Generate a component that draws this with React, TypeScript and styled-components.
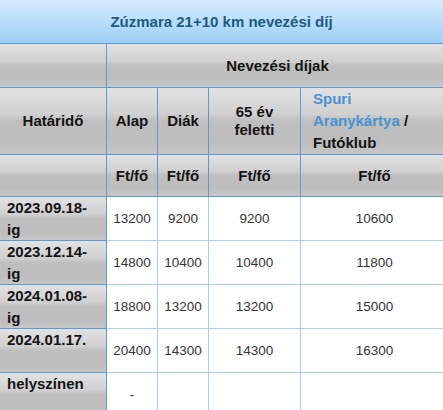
import styled, { createGlobalStyle } from "styled-components";

const GlobalStyle = createGlobalStyle`
  html, body {
    margin: 0;
    padding: 0;
    overflow: hidden;
    background: #ffffff;
  }
  *, *::before, *::after {
    box-sizing: border-box;
  }
`

const Page = styled.div`
  width: 443px;
  font-family: "Liberation Sans", Arial, sans-serif;
`

const Title = styled.div`
  height: 44px;
  display: flex;
  align-items: center;
  justify-content: center;
  background: linear-gradient(to bottom, #d7ecfd 0%, #b9def9 50%, #9dcff7 100%);
  border-bottom: 1px solid #5b9bd5;
  color: #1d5a86;
  font-size: 15px;
  font-weight: bold;
`

const Table = styled.table`
  width: 449px;
  table-layout: fixed;
  border-collapse: separate;
  border-spacing: 0;
`

const Col = styled.col<{ $w: number }>`
  width: ${(p) => p.$w}px;
`

const HeadRow = styled.tr<{ $h: number }>`
  height: ${(p) => p.$h}px;
`

const Head = styled.th`
  padding: 0 2px;
  border-right: 1px solid #5b9bd5;
  border-bottom: 1px solid #5b9bd5;
  background: linear-gradient(
    to bottom,
    #e2e2e2 0%,
    #d0d0d0 40%,
    #bfbfbf 50%,
    #bdbdbd 80%,
    #c6c6c6 100%
  );
  color: #141414;
  font-size: 15px;
  font-weight: bold;
  line-height: 18px;
  text-align: center;
  vertical-align: middle;
`

const CardHead = styled(Head)`
  line-height: 22px;
  padding: 0 0 0 12px;
  text-align: left;
`

const Link = styled.a`
  color: #4a93cf;
  text-decoration: none;
`

const DataRow = styled.tr`
  height: 44px;
`

const DateCell = styled(Head)`
  padding: 0 0 0 7px;
  text-align: left;
  vertical-align: top;
  line-height: 21.5px;
`

const Cell = styled.td`
  padding: 0;
  border-right: 1px solid #a7d0f0;
  border-bottom: 1px solid #a7d0f0;
  color: #363636;
  font-size: 13.5px;
  text-align: center;
  vertical-align: middle;
`

type Fee = {
  until: string[]
  prices: string[]
}

const fees: Fee[] = [
  { until: ["2023.09.18-", "ig"], prices: ["13200", "9200", "9200", "10600"] },
  { until: ["2023.12.14-", "ig"], prices: ["14800", "10400", "10400", "11800"] },
  { until: ["2024.01.08-", "ig"], prices: ["18800", "13200", "13200", "15000"] },
  { until: ["2024.01.17."], prices: ["20400", "14300", "14300", "16300"] },
  { until: ["helyszínen"], prices: ["-", "", "", ""] },
]

export default function App() {
  return (
    <Page>
      <GlobalStyle />
      <Title>Zúzmara 21+10 km nevezési díj</Title>
      <Table>
        <colgroup>
          <Col $w={107} />
          <Col $w={51} />
          <Col $w={51} />
          <Col $w={92} />
          <Col $w={148} />
        </colgroup>
        <thead>
          <HeadRow $h={44}>
            <Head />
            <Head colSpan={4}>Nevezési díjak</Head>
          </HeadRow>
          <HeadRow $h={66}>
            <Head>Határidő</Head>
            <Head>Alap</Head>
            <Head>Diák</Head>
            <Head>65 év<br />feletti</Head>
            <CardHead>
              <Link href="#">Spuri</Link>
              <br />
              <Link href="#">Aranykártya</Link> /
              <br />
              Futóklub
            </CardHead>
          </HeadRow>
          <HeadRow $h={42}>
            <Head />
            <Head>Ft/fő</Head>
            <Head>Ft/fő</Head>
            <Head>Ft/fő</Head>
            <Head>Ft/fő</Head>
          </HeadRow>
        </thead>
        <tbody>
          {fees.map((fee) => (
            <DataRow key={fee.until.join("")}>
              <DateCell>
                {fee.until.map((line, i) => (
                  <span key={line}>
                    {i > 0 && <br />}
                    {line}
                  </span>
                ))}
              </DateCell>
              {fee.prices.map((price, i) => (
                <Cell key={i}>{price}</Cell>
              ))}
            </DataRow>
          ))}
        </tbody>
      </Table>
    </Page>
  )
}
